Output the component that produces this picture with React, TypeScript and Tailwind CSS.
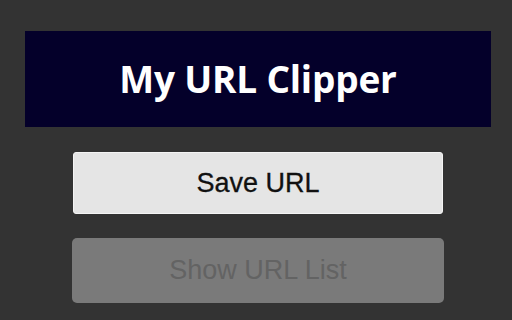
export default function App() {
  return (
    <div className="w-[512px] h-[320px] bg-[#333333] pt-[31px] flex flex-col">
      <div className="ml-[25px] w-[466px] h-[96px] bg-[#04002a] flex items-center justify-center">
        <h1 className="text-white font-bold text-[37px] leading-none pb-[2px] tracking-[-0.2px] font-['Open_Sans','Noto_Sans',sans-serif]">
          My URL Clipper
        </h1>
      </div>
      <button className="mt-[25px] ml-[73px] w-[370px] h-[62px] bg-[#e5e5e5] border border-[#f4f4f4] rounded-[3px] text-[#111111] text-[27px] leading-none font-['Liberation_Sans',Arial,sans-serif] [-webkit-text-stroke:0.3px_#111111]">
        Save URL
      </button>
      <button
        disabled
        className="mt-[24px] ml-[72px] w-[372px] h-[65px] bg-[#7a7a7a] rounded-[5px] text-[#636363] text-[27px] leading-none font-['Liberation_Sans',Arial,sans-serif]"
      >
        Show URL List
      </button>
    </div>
  );
}
